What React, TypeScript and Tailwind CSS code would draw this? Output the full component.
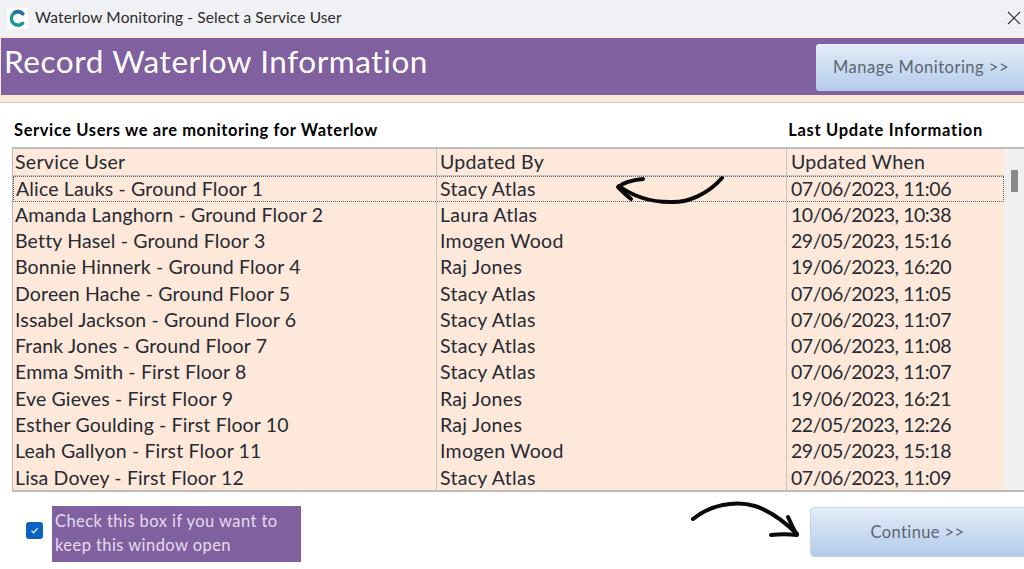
const rows = [
  ["Alice Lauks - Ground Floor 1", "Stacy Atlas", "07/06/2023, 11:06"],
  ["Amanda Langhorn - Ground Floor 2", "Laura Atlas", "10/06/2023, 10:38"],
  ["Betty Hasel - Ground Floor 3", "Imogen Wood", "29/05/2023, 15:16"],
  ["Bonnie Hinnerk - Ground Floor 4", "Raj Jones", "19/06/2023, 16:20"],
  ["Doreen Hache - Ground Floor 5", "Stacy Atlas", "07/06/2023, 11:05"],
  ["Issabel Jackson - Ground Floor 6", "Stacy Atlas", "07/06/2023, 11:07"],
  ["Frank Jones - Ground Floor 7", "Stacy Atlas", "07/06/2023, 11:08"],
  ["Emma Smith - First Floor 8", "Stacy Atlas", "07/06/2023, 11:07"],
  ["Eve Gieves - First Floor 9", "Raj Jones", "19/06/2023, 16:21"],
  ["Esther Goulding - First Floor 10", "Raj Jones", "22/05/2023, 12:26"],
  ["Leah Gallyon - First Floor 11", "Imogen Wood", "29/05/2023, 15:18"],
  ["Lisa Dovey - First Floor 12", "Stacy Atlas", "07/06/2023, 11:09"],
];

function Row({ cells, header, focus }: { cells: string[]; header?: boolean; focus?: boolean }) {
  const pad = header || focus ? "pb-0" : "pb-[2px]";
  return (
    <div
      className={`flex text-[19.5px] tracking-[0.3px] leading-none text-[#262a33] ${header ? "h-[27px] border-b border-[#c4c4c4]" : "h-[26.3px]"} ${
        focus ? "border border-dotted border-[#50606e]" : ""
      }`}
    >
      <div className={`${focus ? "w-[422px]" : "w-[423px]"} ${header ? "" : "tracking-[0.15px]"} ${pad} flex items-center pl-[2px] whitespace-nowrap`}>{cells[0]}</div>
      <div className={`w-[350px] ${pad} flex items-center pl-[3px] border-l border-[#c4c4c4] whitespace-nowrap`}>{cells[1]}</div>
      <div className={`flex-1 ${pad} ${header ? "" : "tracking-[-0.45px]"} flex items-center pl-[4px] border-l border-[#c4c4c4] whitespace-nowrap`}>{cells[2]}</div>
    </div>
  );
}

export default function App() {
  return (
    <div className="w-[1024px] h-[569px] overflow-hidden bg-white font-['Lato','Liberation_Sans',sans-serif] relative">
      {/* Title bar */}
      <div className="h-[36px] bg-[#f0f1f4] flex items-center pl-[7px]">
        <div className="w-[21px] h-[21px] bg-white flex items-center justify-center">
          <svg width="19" height="19" viewBox="0 0 17 17" fill="none">
            <path d="M13.2 4.2A6 6 0 1 0 13.2 12.8" stroke="#159a9c" strokeWidth="3" strokeLinecap="round" />
            <path d="M13.2 4.2A6 6 0 0 0 6 3" stroke="#2a6f9e" strokeWidth="3" strokeLinecap="round" />
          </svg>
        </div>
        <div className="ml-[7px] text-[15.5px] tracking-[0.12px] text-[#2b2b2b]">Waterlow Monitoring - Select a Service User</div>
        <svg className="ml-auto mr-[3px]" width="14" height="14" viewBox="0 0 14 14" fill="none">
          <path d="M1 1 13 13M13 1 1 13" stroke="#333" strokeWidth="1.2" />
        </svg>
      </div>

      {/* Banner */}
      <div className="bg-[#fde8d9] py-[2px] pb-[7px] border-b border-[#c8c8c8] h-[67px]">
        <div className="h-[57px] bg-[#80609f] ml-[1px] flex items-start justify-between">
          <div className="text-[31.5px] tracking-[0.58px] leading-none text-white pl-[3px] pt-[8px]">Record Waterlow Information</div>
          <button className="mt-[6px] w-[210px] h-[47px] -mr-[2px] rounded-l-[3px] bg-gradient-to-b from-[#e4ecf8] to-[#b2cbea] text-[#5c6570] text-[16.5px] tracking-[0.5px] text-left pl-[17px]">
            Manage Monitoring &gt;&gt;
          </button>
        </div>
      </div>

      {/* Section headings */}
      <div className="flex justify-between pl-[14px] pr-[41px] pt-[18px] h-[44px] text-[16.5px] tracking-[0.6px] font-bold text-black leading-[18px]">
        <div>Service Users we are monitoring for Waterlow</div>
        <div className="tracking-[0.7px]">Last Update Information</div>
      </div>

      {/* Table */}
      <div className="ml-[12px] h-[345px] border-y-2 border-l border-[#bcbcbc] bg-[#f0f0f0] flex">
        <div className="w-[991px] bg-[#fde8d9]">
          <Row header cells={["Service User", "Updated By", "Updated When"]} />
          {rows.map((r, i) => (
            <Row key={r[0]} cells={r} focus={i === 0} />
          ))}
        </div>
        <div className="flex-1 flex justify-center pt-[21px]">
          <div className="w-[7px] h-[22px] bg-[#8a8a8a]" />
        </div>
      </div>

      {/* Footer */}
      <div className="flex items-start pl-[26px] pt-[14px]">
        <div className="mt-[16px] w-[17px] h-[17px] rounded-[3px] bg-[#0d62c0] flex items-center justify-center">
          <svg width="11" height="11" viewBox="0 0 11 11" fill="none">
            <path d="M2.5 5.8 4.6 7.8 8.6 3.2" stroke="#dbe7f7" strokeWidth="1.3" />
          </svg>
        </div>
        <div className="ml-[9px] w-[249px] h-[56px] bg-[#80609f] text-[#e6dcf0] text-[16.5px] tracking-[0.43px] leading-[24px] pl-[3px] pt-[3px]">
          Check this box if you want to
          <br />
          keep this window open
        </div>
        <button className="ml-auto mt-[1px] w-[215px] h-[50px] rounded-l-[4px] border border-[#c3d3e8] bg-gradient-to-b from-[#e4ecf8] to-[#b2cbea] text-[#5c6570] text-[16.5px] tracking-[0.4px] -mr-[1px]">
          Continue &gt;&gt;
        </button>
      </div>

      {/* Annotation arrows */}
      <svg className="absolute left-[610px] top-[170px]" width="120" height="40" viewBox="0 0 120 40" fill="none" stroke="#0a0a0a" strokeLinecap="round" strokeLinejoin="round">
        <path d="M112 8C98 24 78 33 60 32C40 32 24 27 9 16" strokeWidth="4" />
        <path d="M33 9C23 10 14 12 8 17C12 21 16 25 21 29" strokeWidth="4" />
      </svg>
      <svg className="absolute left-[685px] top-[495px]" width="125" height="50" viewBox="0 0 125 50" fill="none" stroke="#0a0a0a" strokeLinecap="round" strokeLinejoin="round">
        <path d="M8 24C25 10 50 5 70 11C85 16 100 27 112 39" strokeWidth="4" />
        <path d="M103 22C106 29 109 35 112 40C104 39 94 39 86 40" strokeWidth="4" />
      </svg>
    </div>
  );
}
